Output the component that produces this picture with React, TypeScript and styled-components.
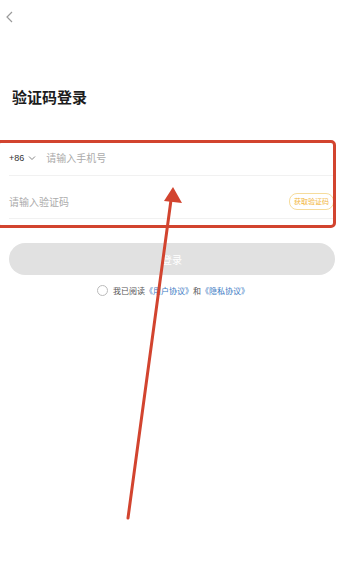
import styled, { createGlobalStyle } from "styled-components";

const GlobalStyle = createGlobalStyle`
  html, body {
    margin: 0;
    padding: 0;
    background: #ffffff;
  }
  body {
    font-family: "Noto Sans CJK SC", "Noto Sans", sans-serif;
  }
`;

const Page = styled.div`
  position: relative;
  width: 354px;
  height: 585px;
  overflow: hidden;
  background: #fff;
`;

const Header = styled.div`
  height: 34px;
  display: flex;
  align-items: center;
  padding-left: 4px;
`;

const Title = styled.h1`
  margin: 53px 0 0 12px;
  font-size: 15px;
  line-height: 20px;
  font-weight: 700;
  color: #1c1c1c;
`;

const Form = styled.div`
  margin-top: 33px;
  padding: 0 20px 0 9px;
`;

const Row = styled.div<{ $h: number; $pt?: number }>`
  display: flex;
  align-items: center;
  height: ${(p) => p.$h}px;
  padding-top: ${(p) => p.$pt ?? 0}px;
  box-sizing: border-box;
  border-bottom: 1px solid #f1f1f1;
`;

const Code = styled.span`
  font-size: 9px;
  color: #333;
  font-family: "Liberation Sans", "Noto Sans CJK SC", sans-serif;
  display: flex;
  align-items: center;
  gap: 4px;
  margin-right: 10px;
`;

const Placeholder = styled.span`
  flex: 1;
  font-size: 10px;
  color: #ababab;
`;

const CodeButton = styled.span`
  font-size: 7px;
  line-height: 13px;
  color: #f2b73f;
  border: 1px solid #f6dc9c;
  border-radius: 8px;
  padding: 1px 4px;
`;

const LoginButton = styled.div`
  margin: 24px 19px 0 9px;
  height: 32px;
  border-radius: 16px;
  background: #e1e1e1;
  color: #fff;
  font-size: 10px;
  display: flex;
  align-items: center;
  justify-content: center;
`;

const Agreement = styled.div`
  margin-top: 10px;
  display: flex;
  align-items: center;
  justify-content: center;
  padding-right: 8px;
  font-size: 8px;
  color: #555;
`;

const Circle = styled.span`
  width: 9px;
  height: 9px;
  border-radius: 50%;
  border: 1px solid #bbb;
  margin-right: 5px;
`;

const LinkText = styled.span`
  color: #3b7ac4;
`;

const Mark = styled.div`
  position: absolute;
  left: -4px;
  top: 140px;
  width: 334px;
  height: 82px;
  border: 3px solid #d2442f;
  border-radius: 5px;
`;

const Arrow = styled.svg`
  position: absolute;
  left: 0;
  top: 0;
  pointer-events: none;
`;

export default function App() {
  return (
    <Page>
      <GlobalStyle />
      <Header>
        <svg width="12" height="14" viewBox="0 0 12 14">
          <path d="M8 2 L3 7 L8 12" fill="none" stroke="#9a9a9a" strokeWidth="1.2" />
        </svg>
      </Header>
      <Title>验证码登录</Title>
      <Form>
        <Row $h={36}>
          <Code>
            +86
            <svg width="8" height="6" viewBox="0 0 8 6">
              <path d="M1 1.5 L4 4.5 L7 1.5" fill="none" stroke="#777" strokeWidth="0.9" />
            </svg>
          </Code>
          <Placeholder>请输入手机号</Placeholder>
        </Row>
        <Row $h={43} $pt={8}>
          <Placeholder>请输入验证码</Placeholder>
          <CodeButton>获取验证码</CodeButton>
        </Row>
      </Form>
      <LoginButton>登录</LoginButton>
      <Agreement>
        <Circle />
        我已阅读<LinkText>《用户协议》</LinkText>和<LinkText>《隐私协议》</LinkText>
      </Agreement>
      <Mark />
      <Arrow width="354" height="585" viewBox="0 0 354 585">
        <line x1="128" y1="518" x2="171" y2="200" stroke="#d2442f" strokeWidth="3" strokeLinecap="round" />
        <path d="M173 187 L182 203 L164 201 Z" fill="#d2442f" />
      </Arrow>
    </Page>
  );
}
